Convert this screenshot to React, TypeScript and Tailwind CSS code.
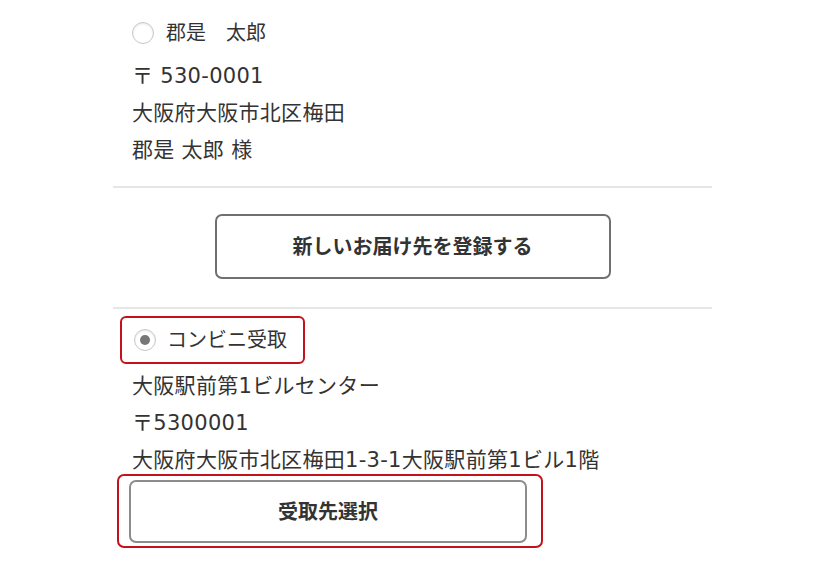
const font = { fontFamily: '"DejaVu Sans", "Noto Sans CJK JP", sans-serif' }

function Radio({ checked }: { checked?: boolean }) {
  return (
    <span className="flex h-[22px] w-[22px] items-center justify-center rounded-full border border-[#c8c8c8] bg-white shadow-[inset_0_1px_2px_rgba(0,0,0,0.1)]">
      {checked && <span className="h-[10px] w-[10px] rounded-full bg-[#777]" />}
    </span>
  )
}

export default function App() {
  return (
    <main className="min-h-[570px] w-[828px] bg-white text-[#333]" style={font}>
      <div className="ml-[113px] w-[599px]">
        {/* registered address */}
        <section className="border-b-2 border-[#e6e6e6] px-[19px] pb-[17px] pt-[12px]">
          <label className="flex h-[42px] items-center gap-[12px] text-[20px]">
            <Radio />
            <span>郡是　太郎</span>
          </label>
          <div className="mt-[4px] text-[21px] leading-[37px] tracking-[0.3px]">
            <p>〒 530-0001</p>
            <p>大阪府大阪市北区梅田</p>
            <p>郡是 太郎 様</p>
          </div>
        </section>

        <div className="flex justify-center border-b-2 border-[#e6e6e6] pb-[28px] pt-[26px]">
          <button className="h-[65px] w-[396px] rounded-[7px] border-2 border-[#707070] bg-white text-[20px] font-bold text-[#333]">
            新しいお届け先を登録する
          </button>
        </div>

        {/* convenience store pickup */}
        <section className="pt-[7px]">
          <div className="ml-[7px] flex h-[48px] w-[185px] items-center gap-[11px] rounded-[6px] border-2 border-[#c3121b] pl-[12px]">
            <Radio checked />
            <span className="text-[20px]">コンビニ受取</span>
          </div>
          <div className="mt-[4px] px-[19px] text-[21px] leading-[37px] tracking-[0.3px]">
            <p>大阪駅前第1ビルセンター</p>
            <p>〒5300001</p>
            <p>大阪府大阪市北区梅田1-3-1大阪駅前第1ビル1階</p>
          </div>
          <div className="-mt-[5px] ml-[4px] w-[426px] rounded-[7px] border-2 border-[#c3121b] pb-[3px] pl-[10px] pt-[4px]">
            <button className="h-[63px] w-[398px] rounded-[7px] border-2 border-[#8c8c8c] bg-white text-[20px] font-bold text-[#333]">
              受取先選択
            </button>
          </div>
        </section>
      </div>
    </main>
  )
}
